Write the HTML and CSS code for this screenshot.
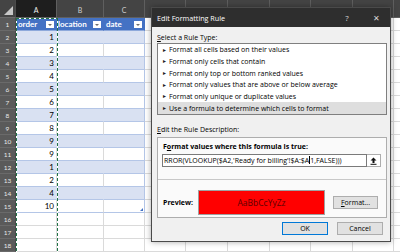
FILE: index.html
```html
<!DOCTYPE html>
<html lang="en">
<head>
    <meta charset="UTF-8">
    <title>Edit Formatting Rule</title>
    <link rel="stylesheet" href="styles.css">
</head>
<body>
    <div class="sheet">
        <div class="row hdr">
            <div class="rh corner"><span class="tri"></span></div>
            <div class="ch ca sel">A</div>
            <div class="ch cb">B</div>
            <div class="ch cc">C</div>
            <div class="ch rest"></div>
        </div>
        <div class="row">
            <div class="rh">1</div>
            <div class="ca th">order<span class="dd"></span></div>
            <div class="cb th">location<span class="dd"></span></div>
            <div class="cc th">date<span class="dd"></span></div>
            <div class="rest"></div>
        </div>
        <div class="row t band"><div class="rh">2</div><div class="ca num">1</div><div class="cb"></div><div class="cc"></div><div class="rest"></div></div>
        <div class="row t"><div class="rh">3</div><div class="ca num">2</div><div class="cb"></div><div class="cc"></div><div class="rest"></div></div>
        <div class="row t band"><div class="rh">4</div><div class="ca num">3</div><div class="cb"></div><div class="cc"></div><div class="rest"></div></div>
        <div class="row t"><div class="rh">5</div><div class="ca num">4</div><div class="cb"></div><div class="cc"></div><div class="rest"></div></div>
        <div class="row t band"><div class="rh">6</div><div class="ca num">5</div><div class="cb"></div><div class="cc"></div><div class="rest"></div></div>
        <div class="row t"><div class="rh">7</div><div class="ca num">6</div><div class="cb"></div><div class="cc"></div><div class="rest"></div></div>
        <div class="row t band"><div class="rh">8</div><div class="ca num">7</div><div class="cb"></div><div class="cc"></div><div class="rest"></div></div>
        <div class="row t"><div class="rh">9</div><div class="ca num">8</div><div class="cb"></div><div class="cc"></div><div class="rest"></div></div>
        <div class="row t band"><div class="rh">10</div><div class="ca num">9</div><div class="cb"></div><div class="cc"></div><div class="rest"></div></div>
        <div class="row t"><div class="rh">11</div><div class="ca num">9</div><div class="cb"></div><div class="cc"></div><div class="rest"></div></div>
        <div class="row t band"><div class="rh">12</div><div class="ca num">1</div><div class="cb"></div><div class="cc"></div><div class="rest"></div></div>
        <div class="row t"><div class="rh">13</div><div class="ca num">2</div><div class="cb"></div><div class="cc"></div><div class="rest"></div></div>
        <div class="row t band"><div class="rh">14</div><div class="ca num">4</div><div class="cb"></div><div class="cc"></div><div class="rest"></div></div>
        <div class="row t"><div class="rh">15</div><div class="ca num">10</div><div class="cb"></div><div class="cc"><span class="handle"></span></div><div class="rest"></div></div>
        <div class="row"><div class="rh">16</div><div class="ca"></div><div class="cb"></div><div class="cc"></div><div class="rest"></div></div>
        <div class="row"><div class="rh">17</div><div class="ca"></div><div class="cb"></div><div class="cc"></div><div class="rest"></div></div>
        <div class="row"><div class="rh">18</div><div class="ca"></div><div class="cb"></div><div class="cc"></div><div class="rest"></div></div>
    </div>

    <!-- copy selection around column A -->
    <div class="ants"></div>

    <div class="dialog">
        <div class="dlg-title">
            <span class="dlg-name">Edit Formatting Rule</span>
            <span class="dlg-btn">?</span>
            <span class="dlg-btn">✕</span>
        </div>
        <div class="dlg-body">
            <div class="lbl"><u>S</u>elect a Rule Type:</div>
            <ul class="rules">
                <li><span class="arr">►</span>Format all cells based on their values</li>
                <li><span class="arr">►</span>Format only cells that contain</li>
                <li><span class="arr">►</span>Format only top or bottom ranked values</li>
                <li><span class="arr">►</span>Format only values that are above or below average</li>
                <li><span class="arr">►</span>Format only unique or duplicate values</li>
                <li class="on"><span class="arr">►</span>Use a formula to determine which cells to format</li>
            </ul>
            <div class="lbl lbl-gap"><u>E</u>dit the Rule Description:</div>
            <div class="desc">
                <div class="desc-top">
                    <div class="lbl bold">F<u>o</u>rmat values where this formula is true:</div>
                    <div class="formula">
                        <div class="input">RROR(VLOOKUP($A2,'Ready for billing'!$A:$A<span class="caret"></span>1,FALSE)))</div>
                        <div class="pick">
                            <svg width="7" height="8" viewBox="0 0 7 8">
                                <path d="M3.5 0.5 L6.5 3.5 L4.5 3.5 L4.5 6 L2.5 6 L2.5 3.5 L0.5 3.5 Z" fill="#111"/>
                                <rect x="0.5" y="6.8" width="6" height="1" fill="#111"/>
                            </svg>
                        </div>
                    </div>
                </div>
                <div class="desc-bottom">
                    <span class="bold prev-lbl">Preview:</span>
                    <div class="preview">AaBbCcYyZz</div>
                    <button class="btn fmt"><u>F</u>ormat...</button>
                </div>
            </div>
            <div class="actions">
                <button class="btn ok">OK</button>
                <button class="btn">Cancel</button>
            </div>
        </div>
    </div>
</body>
</html>
```

FILE: styles.css
```css
body {
    margin: 0;
    width: 400px;
    height: 252px;
    overflow: hidden;
    position: relative;
    background: #fff;
    font-family: Lato, "Liberation Sans", sans-serif;
}

/* ---------- spreadsheet ---------- */

.sheet {
    display: flex;
    flex-direction: column;
}

.row {
    display: flex;
    height: 13px;
    flex-shrink: 0;
}

.row > div {
    box-sizing: border-box;
    height: 100%;
    border-right: 1px solid #dadada;
    border-bottom: 1px solid #dadada;
    position: relative;
}

.rh {
    width: 16px;
    background: #5a5a5a;
    color: #e8e8e8;
    font-size: 6.5px;
    display: flex;
    align-items: center;
    justify-content: center;
    border-right-color: #4a4a4a !important;
    border-bottom-color: #6a6a6a !important;
}

.ca { width: 41px; }
.cb { width: 47px; }
.cc { width: 41px; }

.rest {
    flex: 1;
    border-right: none !important;
    background: repeating-linear-gradient(to right, transparent 0 40.5px, #dadada 40.5px 41.5px);
}

.hdr {
    height: 18px;
    background: #444;
}

.hdr > div {
    border-right-color: #5f5f5f;
    border-bottom-color: #5f5f5f;
}

.hdr .rest {
    background: repeating-linear-gradient(to right, transparent 0 40.5px, #5f5f5f 40.5px 41.5px);
}

.corner {
    background: #444;
    align-items: flex-end;
    justify-content: flex-end;
    padding: 0 2px 2px 0;
}

.tri {
    width: 9px;
    height: 9px;
    background: #c8c8c8;
    clip-path: polygon(100% 0, 100% 100%, 0 100%);
}

.ch {
    color: #cfcfcf;
    font-size: 7px;
    display: flex;
    align-items: flex-end;
    justify-content: center;
    padding-bottom: 3px;
}

.ch.sel {
    background: #1e1e1e;
    color: #f0f0f0;
}

.th {
    background: #4472c4;
    color: #fff;
    font-weight: 700;
    font-size: 8px;
    display: flex;
    align-items: center;
    justify-content: space-between;
    padding: 0 2px 0 2px;
    border-right-color: #4472c4 !important;
    border-bottom-color: #8ea9db !important;
}

.cb.th { padding-left: 1px; }

.dd {
    width: 8px;
    height: 7px;
    background: #fff;
    position: relative;
}

.dd::after {
    content: "";
    position: absolute;
    left: 2px;
    top: 3px;
    border-left: 2px solid transparent;
    border-right: 2px solid transparent;
    border-top: 2px solid #6d6d6d;
}

.t .ca,
.t .cb,
.t .cc {
    border-bottom-color: #b4c6e7;
}

.t .cc {
    border-right-color: #b4c6e7;
}

.band .ca,
.band .cb,
.band .cc {
    background: #d9e1f2;
}

.band .ca,
.band .cb {
    border-right-color: #d9e1f2;
}

.num {
    font-size: 8px;
    line-height: 12px;
    text-align: right;
    padding-right: 2px;
    color: #000;
}

.handle {
    position: absolute;
    right: 1px;
    bottom: 1px;
    width: 3px;
    height: 3px;
    background: #4472c4;
    clip-path: polygon(100% 0, 100% 100%, 0 100%);
}

.ants {
    position: absolute;
    left: 16px;
    top: 18px;
    width: 42px;
    height: 240px;
    background-image:
        repeating-linear-gradient(to bottom, #217346 0 3px, #fff 3px 5px),
        repeating-linear-gradient(to bottom, #217346 0 3px, #fff 3px 5px),
        repeating-linear-gradient(to right, #217346 0 3px, #fff 3px 5px);
    background-size: 1px 100%, 1px 100%, 100% 1px;
    background-position: left top, right top, left top;
    background-repeat: no-repeat;
}

/* ---------- dialog ---------- */

.dialog {
    position: absolute;
    left: 151px;
    top: 7px;
    width: 240px;
    height: 235px;
    box-sizing: border-box;
    border: 1px solid #4a4a4a;
    background: #f0f0f0;
    box-shadow: 0 0 6px rgba(0,0,0,0.35);
    font-family: "Open Sans", sans-serif;
    font-size: 7px;
    color: #000;
    display: flex;
    flex-direction: column;
}

.dlg-title {
    height: 19px;
    background: #2e2e2e;
    color: #fff;
    display: flex;
    align-items: center;
    padding-left: 5px;
    padding-right: 4px;
    font-size: 7.2px;
}

.dlg-name {
    flex: 1;
}

.dlg-btn {
    width: 20px;
    text-align: center;
    color: #d8d8d8;
    font-size: 8px;
}

.dlg-btn + .dlg-btn {
    margin-left: 9px;
}

.dlg-body {
    padding: 6px 3px 0 5px;
    display: flex;
    flex-direction: column;
}

.lbl {
    line-height: 10px;
    height: 10px;
}

.lbl-gap {
    margin-top: 10px;
}

.bold {
    font-weight: 700;
}

.rules {
    list-style: none;
    margin: 0;
    padding: 0;
    height: 72px;
    box-sizing: border-box;
    border: 1px solid #7f7f7f;
    background: #fff;
}

.rules li {
    height: 11.66px;
    display: flex;
    align-items: center;
    padding-left: 4px;
}

.rules li.on {
    background: #dedede;
}

.arr {
    font-size: 5px;
    width: 7px;
    color: #222;
}

.desc {
    margin-top: 2px;
    height: 81px;
    box-sizing: border-box;
    border: 1px solid #adadad;
    background: #fafafa;
}

.desc-top {
    padding: 4px 5px 12px 4px;
    border-bottom: 1px solid #c8c8c8;
}

.desc-top .lbl {
    margin-left: 1px;
}

.formula {
    display: flex;
    margin-top: 2px;
    height: 13px;
}

.input {
    width: 205px;
    box-sizing: border-box;
    border: 1px solid #7a7a7a;
    background: #fff;
    line-height: 11px;
    padding-left: 1px;
    white-space: nowrap;
    overflow: hidden;
}

.caret {
    display: inline-block;
    width: 1px;
    height: 8px;
    background: #000;
    vertical-align: -1px;
}

.pick {
    width: 14px;
    box-sizing: border-box;
    border: 1px solid #adadad;
    border-left: none;
    background: #fff;
    display: flex;
    align-items: center;
    justify-content: center;
}

.desc-bottom {
    display: flex;
    align-items: center;
    padding: 10px 0 0 5px;
}

.prev-lbl {
    width: 35px;
}

.preview {
    width: 127px;
    height: 25px;
    box-sizing: border-box;
    border: 1px solid #a0a0a0;
    background: #ff0000;
    color: #5c0000;
    font-family: "Open Sans", sans-serif;
    font-size: 8.5px;
    display: flex;
    align-items: center;
    justify-content: center;
}

.btn {
    height: 13px;
    box-sizing: border-box;
    border: 1px solid #adadad;
    background: #e1e1e1;
    font-family: "Open Sans", sans-serif;
    font-size: 7px;
    color: #000;
    padding: 0;
}

.fmt {
    width: 45px;
    margin-left: 8px;
}

.actions {
    display: flex;
    justify-content: flex-end;
    gap: 9px;
    margin-top: 4px;
    padding-right: 4px;
}

.actions .btn {
    width: 46px;
}

.btn.ok {
    border-color: #0078d7;
}
```
